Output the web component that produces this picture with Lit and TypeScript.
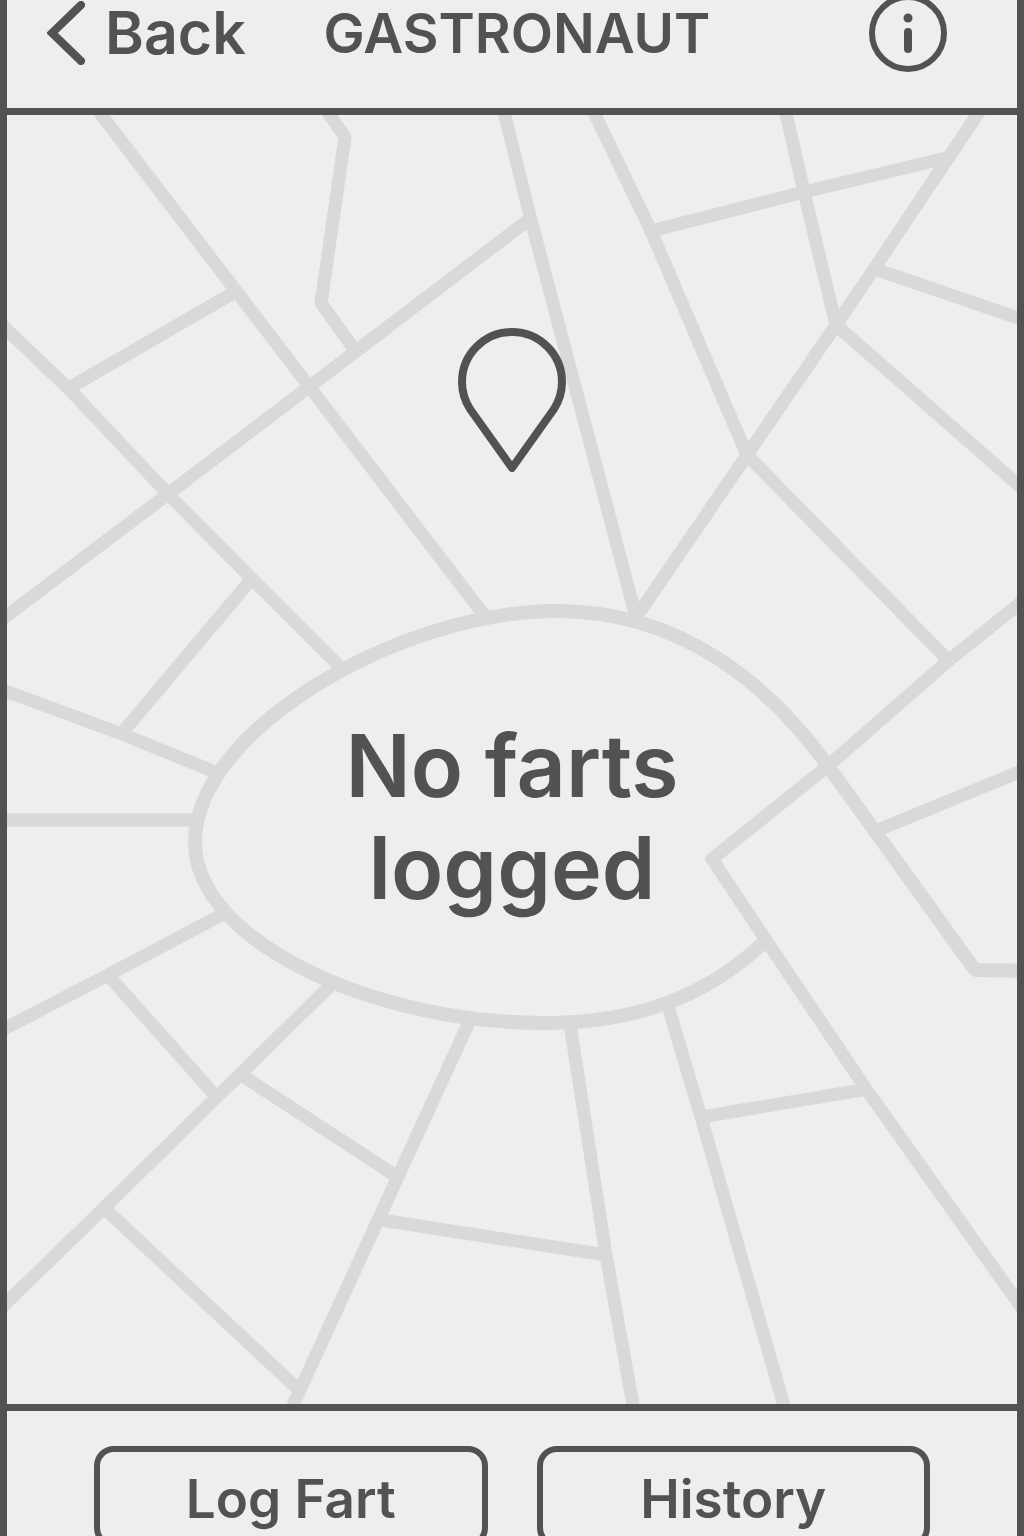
import { LitElement, html, css, svg } from "lit";
import { customElement } from "lit/decorators.js";

const STREETS = [
  "M90 100 L484 615",
  "M318 98 L345 137 L321 303 L354 349",
  "M0 621 L168 494 L309 387 L531 218",
  "M0 323 L69 389 L168 494 L250 577 L342 669",
  "M69 388 L235 292",
  "M501 100 L531 220 L635 613",
  "M588 100 L651 231 L747 455 L948 660",
  "M651 231 L804 192 L946 158",
  "M783 100 L804 192 L836 325",
  "M987 100 L874 269 L836 325 L747 455 L637 616",
  "M875 269 L1024 320",
  "M836 325 L1024 490",
  "M1024 600 L948 661 L828 766 L712 859 L766 940 L866 1089 L1024 1311",
  "M878 830 L1024 770",
  "M250 581 L122 733",
  "M0 689 L122 734 L220 774",
  "M0 820 L194 820",
  "M0 1031 L108 975 L227 912",
  "M108 975 L213 1093",
  "M334 982 L104 1208 L0 1309",
  "M240 1074 L396 1176",
  "M104 1208 L299 1390",
  "M470 1020 L288 1416",
  "M381 1220 L606 1255",
  "M570 1024 L606 1255 L635 1416",
  "M668 1006 L701 1117 L787 1416",
  "M701 1117 L868 1089",
];

const RING =
  "M1024 971 L975 970 L828 766 C768 683 680 611 557 611 C400 611 195 730 195 842 C195 942 375 1023 543 1023 C630 1023 705 1000 766 940";

@customElement("street-map")
export class StreetMap extends LitElement {
  static styles = css`
    :host {
      display: block;
      min-height: 0;
      overflow: hidden;
    }
    .streets {
      display: block;
      width: 100%;
      height: 100%;
      fill: none;
      stroke: #d9d9d9;
      stroke-width: 13;
      stroke-linejoin: round;
    }
    .ring {
      stroke-width: 14;
      stroke-linejoin: bevel;
    }
  `;

  render() {
    return html`
      <svg class="streets" viewBox="7 115 1010 1289" preserveAspectRatio="xMidYMid slice" aria-hidden="true">
        ${STREETS.map((d) => svg`<path d=${d} />`)}
        <path class="ring" d=${RING} />
      </svg>
    `;
  }
}

@customElement("app-root")
export class AppRoot extends LitElement {
  static styles = css`
    :host {
      display: block;
      --ink: #525252;
      --paper: #eeeeee;
      color: var(--ink);
      font-family: Inter, "Liberation Sans", Arial, sans-serif;
      font-weight: 600;
    }
    .screen {
      box-sizing: border-box;
      display: flex;
      flex-direction: column;
      height: 100vh;
      overflow: hidden;
      background: var(--paper);
      border: solid var(--ink);
      border-width: 0 7px;
    }
    .bar {
      box-sizing: border-box;
      flex: none;
      display: grid;
      grid-template-columns: 1fr auto 1fr;
      align-items: center;
      height: 157px;
      margin-top: -42px;
      padding: 0 30px 0 40px;
      border-bottom: 7px solid var(--ink);
    }
    button {
      font: inherit;
      color: inherit;
      background: none;
      border: 0;
      padding: 0;
      cursor: pointer;
    }
    .back {
      justify-self: start;
      display: flex;
      align-items: center;
      gap: 20px;
      font-size: 59px;
      line-height: 60px;
    }
    .icon {
      display: block;
      fill: none;
      stroke: currentColor;
      stroke-linejoin: round;
      stroke-linecap: round;
    }
    .title {
      margin: 0;
      font-size: 55px;
      font-weight: 600;
      line-height: 60px;
    }
    .info {
      justify-self: end;
      margin-right: 40px;
    }
    .stage {
      flex: 1;
      min-height: 0;
      display: grid;
      grid-template: minmax(0, 1fr) / minmax(0, 1fr);
    }
    .stage > * {
      grid-area: 1 / 1;
    }
    .empty {
      display: flex;
      flex-direction: column;
      align-items: center;
      gap: 242px;
      padding-top: 213px;
    }
    .message {
      margin: 0;
      max-width: 400px;
      font-size: 86px;
      line-height: 102px;
      text-align: center;
    }
    .actions {
      box-sizing: border-box;
      flex: none;
      display: grid;
      grid-template-columns: 1fr 1fr;
      gap: 49px;
      height: 132px;
      padding: 35px 87px 0;
      border-top: 7px solid var(--ink);
    }
    .action {
      box-sizing: border-box;
      height: 102px;
      padding-top: 4px;
      border: 6px solid var(--ink);
      border-radius: 20px;
      font-size: 53px;
      line-height: 60px;
    }
  `;

  render() {
    return html`
      <div class="screen">
        <header class="bar">
          <button class="back" type="button">
            <svg class="icon" width="38" height="64" viewBox="0 0 38 64" stroke-width="8" aria-hidden="true">
              <path d="M34 4 L5 32 L34 60" stroke-linejoin="miter" />
            </svg>
            <span>Back</span>
          </button>
          <h1 class="title">GASTRONAUT</h1>
          <button class="info" type="button" aria-label="Information">
            <svg class="icon" width="78" height="78" viewBox="0 0 78 78" aria-hidden="true">
              <circle cx="39" cy="39" r="36" stroke-width="6" />
              <circle cx="39" cy="24" r="4.5" fill="currentColor" stroke="none" />
              <path d="M39 38 V55" stroke-width="8" />
            </svg>
          </button>
        </header>
        <main class="stage">
          <street-map></street-map>
          <div class="empty">
            <svg class="icon" width="108" height="145" viewBox="0 0 108 145" stroke-width="8" aria-hidden="true">
              <path d="M54 140 L12 81 C7 73 4 63 4 54 A50 50 0 0 1 104 54 C104 63 101 73 96 81 Z" />
            </svg>
            <p class="message">No farts logged</p>
          </div>
        </main>
        <footer class="actions">
          <button class="action" type="button">Log Fart</button>
          <button class="action" type="button">History</button>
        </footer>
      </div>
    `;
  }
}
